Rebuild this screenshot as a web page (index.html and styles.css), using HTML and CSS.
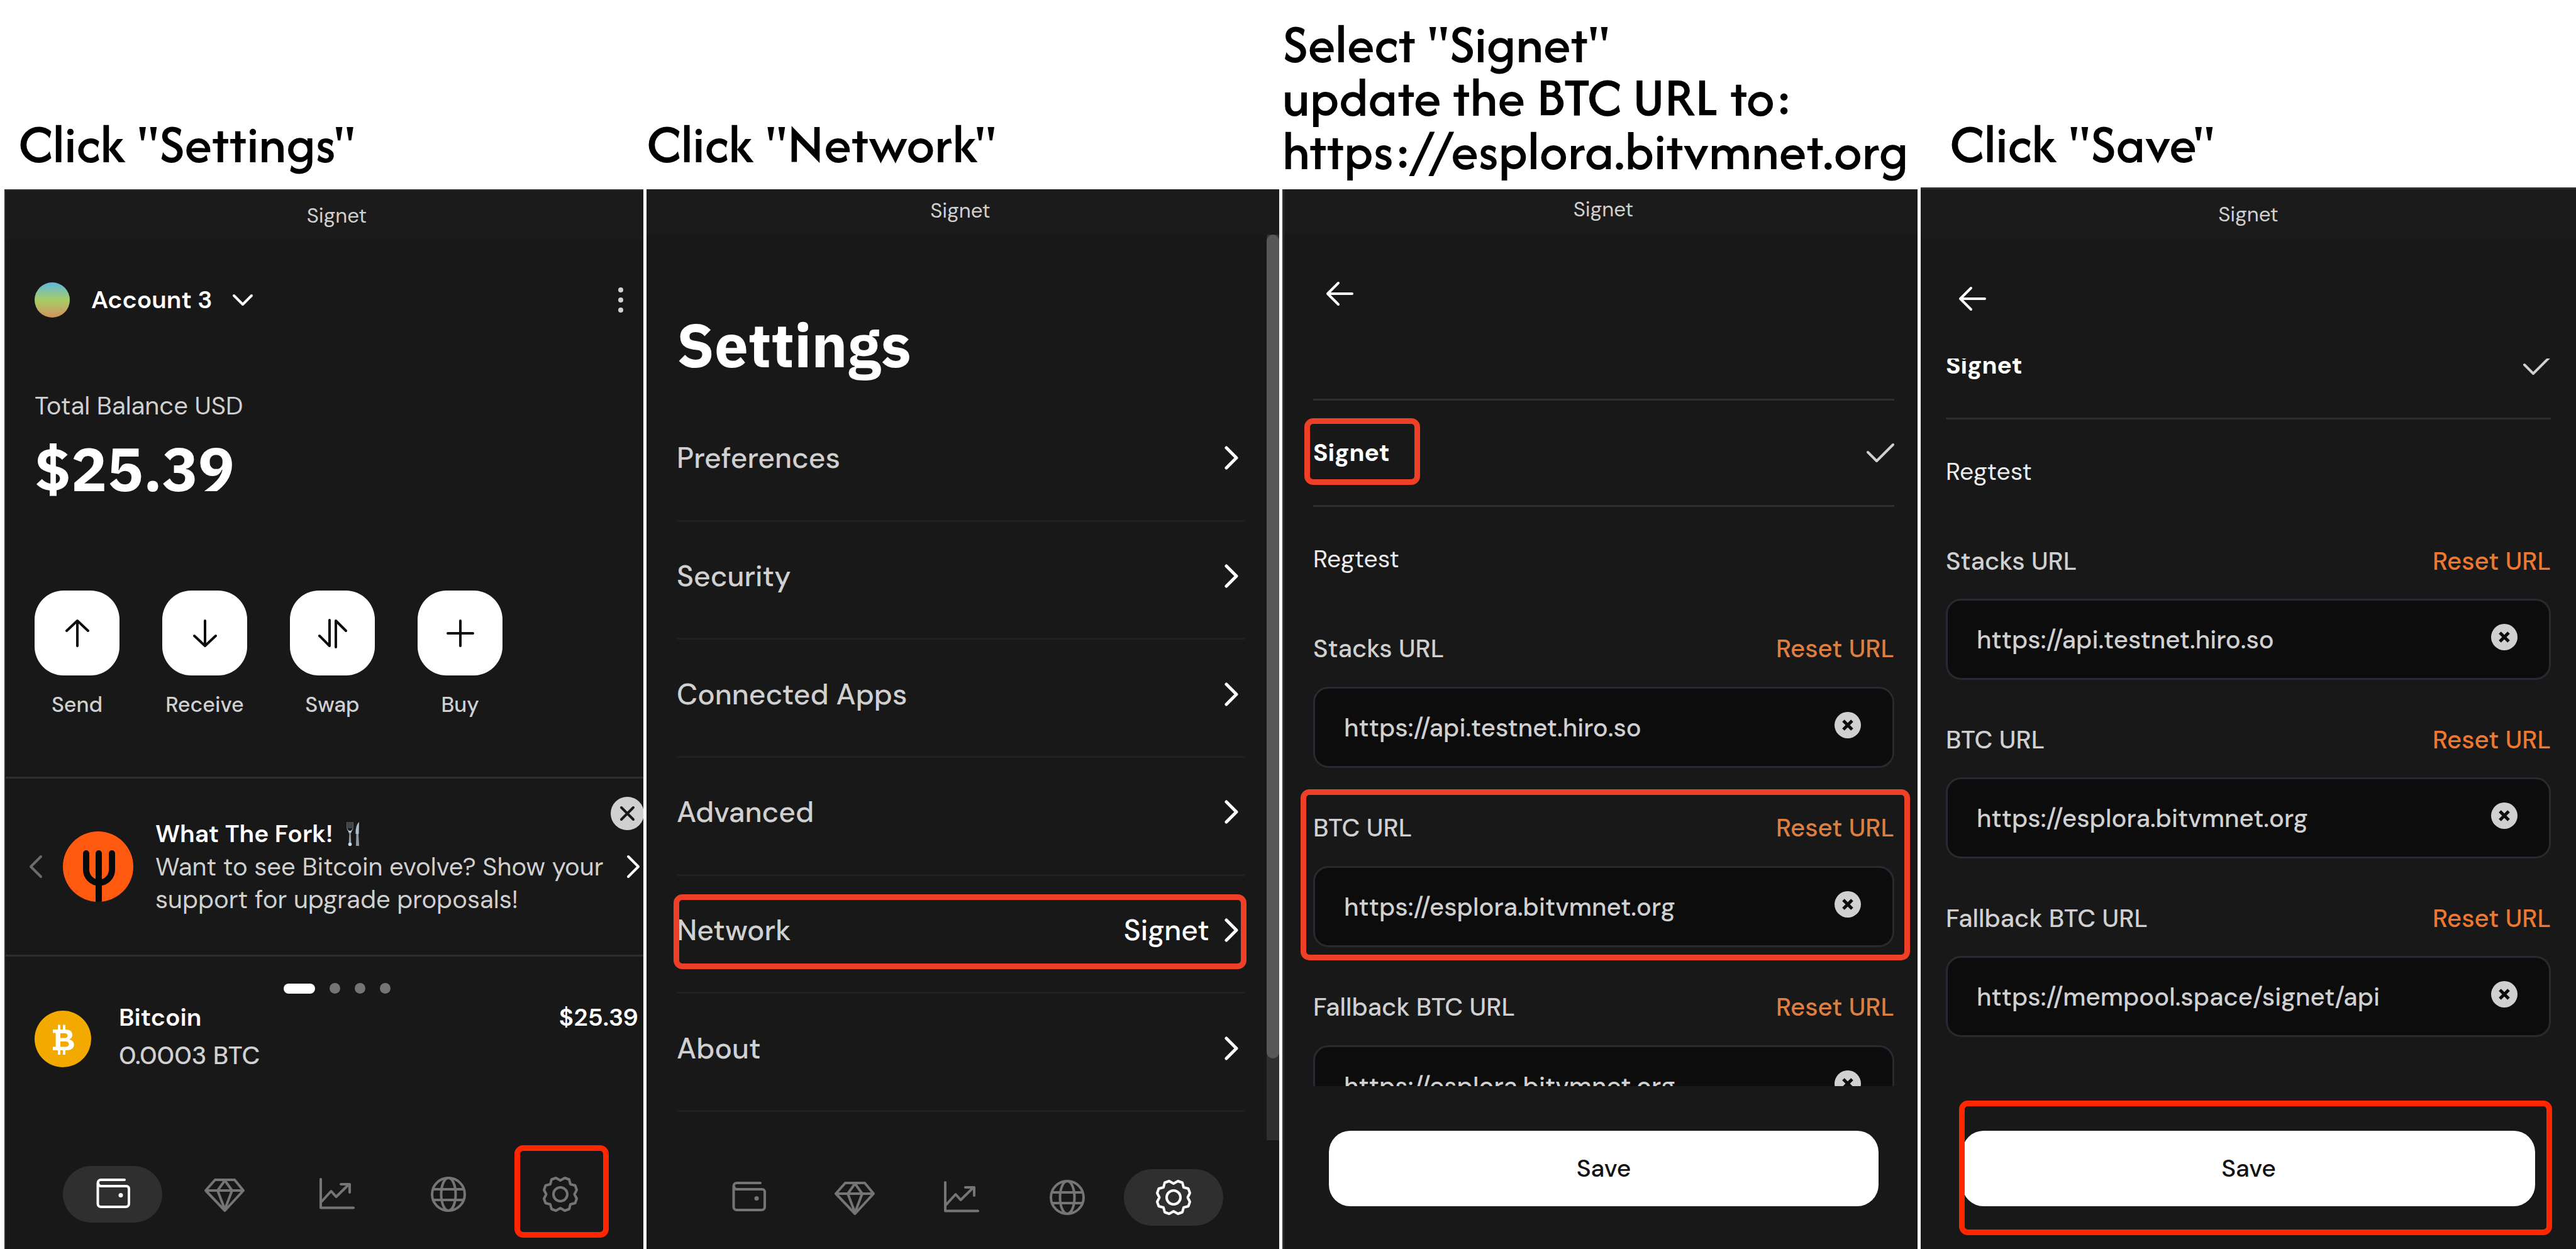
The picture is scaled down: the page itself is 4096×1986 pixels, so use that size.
FILE: index.html
```html
<!DOCTYPE html>
<html lang="en">
<head>
<meta charset="utf-8">
<meta name="viewport" content="width=device-width, initial-scale=1">
<title>Switch the wallet to Signet</title>
<link rel="stylesheet" href="styles.css">
</head>
<body>
<svg class="defs" aria-hidden="true">
  <symbol id="wallet" viewBox="0 0 72 72"><path d="M55 13H17.500a5 5 0 0 0-5 5v33a5 5 0 0 0 5 5H57a5 5 0 0 0 5-5V27a4 4 0 0 0-4-4H17a5 5 0 0 1-4-5"/><circle class="solid" cx="49" cy="37.500" r="3.500"/></symbol>
  <symbol id="gem" viewBox="0 0 72 72"><path d="M21 13H52L66 30 36.500 62 6 30ZM6 30H66M36.500 14L25 30 36.500 60 48 30Z"/></symbol>
  <symbol id="chart" viewBox="0 0 72 72"><path d="M11 12V57.500H63M12 48L27.500 31 35.500 40 56 20M43 20H57V33"/></symbol>
  <symbol id="globe" viewBox="0 0 72 72"><circle cx="36" cy="36" r="26"/><ellipse cx="36" cy="36" rx="11.500" ry="26"/><path d="M12 28H60M12 45H60"/></symbol>
  <symbol id="gear" viewBox="0 0 72 72"><path d="M36 14L43 10 50 12.500 52 20 59.500 22 62 29 58.500 36 62 43 59.500 50 52 52 50 59.500 43 62 36 58 29 62 22 59.500 20 52 12.500 50 10 43 13.500 36 10 29 12.500 22 20 20 22 12.500 29 10Z"/><circle cx="36" cy="36" r="11"/></symbol>
  <symbol id="next" viewBox="0 0 22 38"><path d="M3 3L19 19 3 35"/></symbol>
  <symbol id="back" viewBox="0 0 44 40"><path d="M20 3L3 20 20 37M3 20H42"/></symbol>
  <symbol id="check" viewBox="0 0 44 32"><path d="M2 15L16 29 42 3"/></symbol>
  <symbol id="clear" viewBox="0 0 42 42"><circle class="disc" cx="21" cy="21" r="21"/><path d="M14 14L28 28M28 14L14 28"/></symbol>
</svg>

<main class="board">

  <section class="step">
    <h2 class="caption">Click "Settings"</h2>
    <div class="phone phone-wallet">
      <header class="netbar">Signet</header>
      <div class="account">
        <span class="avatar"></span>
        <button class="account-name">Account 3
          <svg class="line down" viewBox="0 0 34 20"><path d="M3 3L17 17 31 3"/></svg>
        </button>
        <button class="kebab" aria-label="More"><svg viewBox="0 0 54 40"><circle cx="27" cy="4" r="4"/><circle cx="27" cy="20" r="4"/><circle cx="27" cy="36" r="4"/></svg></button>
      </div>
      <p class="balance-label">Total Balance USD</p>
      <p class="balance">$25.39</p>
      <div class="actions">
        <div class="action"><button aria-labelledby="a1"><svg viewBox="0 0 48 48"><path d="M24 44V4M7 20L24 4 41 20"/></svg></button><span id="a1">Send</span></div>
        <div class="action"><button aria-labelledby="a2"><svg viewBox="0 0 48 48"><path d="M24 4V44M7 28L24 44 41 28"/></svg></button><span id="a2">Receive</span></div>
        <div class="action"><button aria-labelledby="a3"><svg viewBox="0 0 48 48"><path d="M19 3V44L3 28M29 46V4L45 20"/></svg></button><span id="a3">Swap</span></div>
        <div class="action"><button aria-labelledby="a4"><svg viewBox="0 0 48 48"><path d="M24 4V44M4 24H44"/></svg></button><span id="a4">Buy</span></div>
      </div>
      <div class="banner">
        <button class="arrow" aria-label="Previous"><svg class="line dim flip"><use href="#next"/></svg></button>
        <svg class="fork" viewBox="0 0 112 112"><clipPath id="round"><circle cx="56" cy="56" r="56"/></clipPath><g clip-path="url(#round)"><rect width="112" height="112" fill="#ff5a0f"/><path d="M37 35V61A20 20 0 0 0 78 61V35M57 35V114" fill="none" stroke="#070a0c" stroke-width="10" stroke-linecap="round"/></g></svg>
        <div class="banner-text">
          <strong>What The Fork! <svg class="cutlery" viewBox="0 0 22 40"><path d="M1 1V10Q1 15 5.500 16 10 15 10 10V1M4 1V11M7 1V11" fill="none" stroke="#6d7278" stroke-width="1.500"/><path d="M2 13Q5.500 18 9 13L7 19H4Z" fill="#c4dcf4"/><path d="M4.500 17H6.500L7.500 38H3.500Z" fill="#8b98a6"/><circle cx="5.500" cy="36.500" r="2.800" fill="#c4dcf4"/><path d="M20 1Q14 6 14.500 20H19.500Z" fill="#aebdca"/><path d="M15.500 20H19L20 39H15Z" fill="#8f9aa5"/></svg></strong>
          <span>Want to see Bitcoin evolve? Show your support for upgrade proposals!</span>
        </div>
        <button class="arrow" aria-label="Next"><svg class="line"><use href="#next"/></svg></button>
        <button class="close" aria-label="Close"><svg viewBox="0 0 53 53"><path d="M17 17L36 36M36 17L17 36"/></svg></button>
      </div>
      <div class="dots"><i class="on"></i><i></i><i></i><i></i></div>
      <div class="coin">
        <svg viewBox="0 0 90 90"><circle cx="45" cy="45" r="45" fill="#f2a900"/><path fill="#fff" fill-rule="evenodd" d="M29 30H49C57 30 60 34 60 38.500 60 42 58 44.500 55 45.800 60 47 62.600 50 62.600 54 62.600 60 58 63 50 63H29V57.500H33.600V35.500H29ZM41 36V43.500H47C51 43.500 52.500 42 52.500 39.700 52.500 37.500 51 36 47 36ZM41 49V57.500H48C52.500 57.500 54.500 56 54.500 53.200 54.500 50.500 52.500 49 48 49Z"/><path stroke="#fff" stroke-width="4" d="M39 22.500V31M47 22.500V31M39 62V70M47 62V70"/></svg>
        <div class="coin-text"><strong>Bitcoin</strong><span>0.0003 BTC</span></div>
        <strong class="coin-value">$25.39</strong>
      </div>
      <nav class="tabs">
        <button class="on" aria-label="Wallet"><svg><use href="#wallet"/></svg></button>
        <button aria-label="Collectibles"><svg><use href="#gem"/></svg></button>
        <button aria-label="Stacking"><svg><use href="#chart"/></svg></button>
        <button aria-label="Explore"><svg><use href="#globe"/></svg></button>
        <button aria-label="Settings"><svg><use href="#gear"/></svg><span class="mark mark-pure mark-gear"></span></button>
      </nav>
    </div>
  </section>

  <section class="step">
    <h2 class="caption">Click "Network"</h2>
    <div class="phone phone-settings">
      <header class="netbar">Signet</header>
      <div class="pane">
        <div class="menu">
          <h1>Settings</h1>
          <ul>
            <li><button>Preferences<svg class="line"><use href="#next"/></svg></button></li>
            <li><button>Security<svg class="line"><use href="#next"/></svg></button></li>
            <li><button>Connected Apps<svg class="line"><use href="#next"/></svg></button></li>
            <li><button>Advanced<svg class="line"><use href="#next"/></svg></button></li>
            <li><button>Network<span class="value">Signet</span><svg class="line"><use href="#next"/></svg></button><span class="mark mark-row"></span></li>
            <li><button>About<svg class="line"><use href="#next"/></svg></button></li>
          </ul>
        </div>
        <div class="track"><div class="thumb"></div></div>
      </div>
      <nav class="tabs">
        <button aria-label="Wallet"><svg><use href="#wallet"/></svg></button>
        <button aria-label="Collectibles"><svg><use href="#gem"/></svg></button>
        <button aria-label="Stacking"><svg><use href="#chart"/></svg></button>
        <button aria-label="Explore"><svg><use href="#globe"/></svg></button>
        <button class="on" aria-label="Settings"><svg><use href="#gear"/></svg></button>
      </nav>
    </div>
  </section>

  <section class="step">
    <h2 class="caption caption-long">Select "Signet"<br>update the BTC URL to:<br>https://esplora.bitvmnet.org</h2>
    <div class="phone phone-edit">
      <header class="netbar">Signet</header>
      <div class="topbar"><button aria-label="Back"><svg class="line"><use href="#back"/></svg></button></div>
      <div class="scroll">
        <div class="scrolled">
          <button class="option">Testnet</button>
          <button class="option chosen"><span class="option-name">Signet<span class="mark mark-option"></span></span><svg class="line"><use href="#check"/></svg></button>
          <button class="option">Regtest</button>
          <div class="field">
            <div class="field-head"><label for="s1">Stacks URL</label><button>Reset URL</button></div>
            <div class="box"><input id="s1" type="text" value="https://api.testnet.hiro.so"><button aria-label="Clear"><svg><use href="#clear"/></svg></button></div>
          </div>
          <div class="field">
            <div class="field-head"><label for="b1">BTC URL</label><button>Reset URL</button></div>
            <div class="box"><input id="b1" type="text" value="https://esplora.bitvmnet.org"><button aria-label="Clear"><svg><use href="#clear"/></svg></button></div>
            <span class="mark mark-field"></span>
          </div>
          <div class="field">
            <div class="field-head"><label for="f1">Fallback BTC URL</label><button>Reset URL</button></div>
            <div class="box"><input id="f1" type="text" value="https://esplora.bitvmnet.org"><button aria-label="Clear"><svg><use href="#clear"/></svg></button></div>
          </div>
        </div>
      </div>
      <footer class="foot"><button class="save">Save</button></footer>
    </div>
  </section>

  <section class="step">
    <h2 class="caption">Click "Save"</h2>
    <div class="phone phone-save">
      <header class="netbar">Signet</header>
      <div class="topbar"><button aria-label="Back"><svg class="line"><use href="#back"/></svg></button></div>
      <div class="scroll">
        <div class="scrolled">
          <button class="option chosen"><span class="option-name">Signet</span><svg class="line"><use href="#check"/></svg></button>
          <button class="option">Regtest</button>
          <div class="field">
            <div class="field-head"><label for="s2">Stacks URL</label><button>Reset URL</button></div>
            <div class="box"><input id="s2" type="text" value="https://api.testnet.hiro.so"><button aria-label="Clear"><svg><use href="#clear"/></svg></button></div>
          </div>
          <div class="field">
            <div class="field-head"><label for="b2">BTC URL</label><button>Reset URL</button></div>
            <div class="box"><input id="b2" type="text" value="https://esplora.bitvmnet.org"><button aria-label="Clear"><svg><use href="#clear"/></svg></button></div>
          </div>
          <div class="field">
            <div class="field-head"><label for="f2">Fallback BTC URL</label><button>Reset URL</button></div>
            <div class="box"><input id="f2" type="text" value="https://mempool.space/signet/api"><button aria-label="Clear"><svg><use href="#clear"/></svg></button></div>
          </div>
        </div>
      </div>
      <footer class="foot"><button class="save">Save<span class="mark mark-pure mark-save"></span></button></footer>
    </div>
  </section>

</main>
</body>
</html>
```
FILE: styles.css
```css
:root {
  --bg: #181818;
  --bar: #1b1b1b;
  --rule: #2e2e2e;
  --text: #d0d0d0;
  --white: #fff;
}

* { box-sizing: border-box; }

body {
  margin: 0;
  background: #fff;
  color: var(--text);
  font: 500 40px/52px "DM Sans", "Open Sans", sans-serif;
}

h1, h2, p, ul { margin: 0; padding: 0; }
li { list-style: none; }
strong { font-size: 39px; font-weight: 600; color: var(--white); }

button {
  margin: 0;
  padding: 0;
  border: 0;
  background: none;
  color: inherit;
  font: inherit;
  text-align: left;
  cursor: pointer;
}

svg { display: block; flex: none; }
.defs { position: absolute; width: 0; height: 0; }

.line {
  fill: none;
  stroke: var(--white);
  stroke-width: 4;
  stroke-linecap: round;
  stroke-linejoin: round;
}
.line.dim { stroke: #6b6b6b; }
.flip { transform: scaleX(-1); }

/* Four steps side by side */
.board {
  display: grid;
  grid-template-columns: 1016fr 1006fr 1010fr 1042fr;
  column-gap: 5px;
  height: 100vh;
  padding-left: 7px;
}

.step {
  display: flex;
  flex-direction: column;
  min-width: 0;
  min-height: 0;
}

.caption {
  display: flex;
  flex-direction: column;
  justify-content: flex-end;
  flex: none;
  height: 301px;
  padding: 0 0 30px 22px;
  color: #000;
  font: 500 89px/85px "Afacad", "Lato", sans-serif;
  white-space: nowrap;
}
.caption br { display: none; }
.step:nth-child(2) .caption { padding-left: 0; }
.caption-long {
  display: block;
  padding: 27px 0 0;
}
.caption-long br { display: inline; }
.step:nth-child(4) .caption {
  height: 298px;
  padding: 0 0 27px 46px;
}

.phone {
  position: relative;
  display: flex;
  flex-direction: column;
  flex: 1;
  min-height: 0;
  overflow: hidden;
  background: var(--bg);
}

.netbar {
  flex: none;
  padding-bottom: 18px;
  background: var(--bar);
  font-size: 33px;
  font-weight: 400;
  line-height: 40px;
  text-align: center;
}
.phone-wallet .netbar { padding: 20px 0 18px 39px; }
.phone-settings .netbar { padding: 14px 8px 18px 0; }
.phone-edit .netbar { padding-top: 12px; padding-left: 8px; }
.phone-save .netbar { padding-top: 20px; }

/* Red outlines around what to press */
.mark {
  position: absolute;
  border: 9px solid #ee4026;
  border-radius: 14px;
  pointer-events: none;
}
.mark-pure { border-color: #ff2600; }
.mark-gear { inset: -33px 2px -24px 6px; }
.mark-row { inset: 29px -2px 36px -5px; }
.mark-option { inset: -29px -48px -25px -14px; }
.mark-field { inset: -35px -25px -21px -20px; }
.mark-save { inset: -48px -27px -46px -5px; }

/* Wallet */
.phone-wallet {
  border-top: 2px solid var(--rule);
  border-left: 2px solid var(--rule);
}
.account {
  display: flex;
  align-items: center;
  margin: 68px 9px 0 46px;
}
.avatar {
  width: 56px;
  height: 56px;
  margin-right: 34px;
  border-radius: 50%;
  background: linear-gradient(#5eb9de, #a9cc66 50%, #d0935f);
}
.account-name {
  display: flex;
  align-items: center;
  gap: 31px;
  color: var(--white);
  font-size: 39px;
  font-weight: 600;
}
.down { width: 34px; height: 20px; }
.kebab { margin-left: auto; fill: var(--text); }
.kebab svg { width: 54px; height: 40px; }
.balance-label { margin: 114px 0 0 46px; font-weight: 400; }
.balance {
  margin: 19px 0 0 46px;
  color: var(--white);
  font: 700 96px/110px "IBM Plex Sans", "Open Sans", sans-serif;
}
.actions {
  display: flex;
  gap: 68px;
  padding: 139px 0 92px 46px;
}
.action {
  display: flex;
  flex-direction: column;
  align-items: center;
  gap: 25px;
  width: 135px;
  font-size: 34px;
  line-height: 44px;
}
.action button {
  display: grid;
  place-items: center;
  width: 135px;
  height: 135px;
  border-radius: 46px;
  background: var(--white);
}
.action svg {
  width: 48px;
  height: 48px;
  fill: none;
  stroke: #0c0c0c;
  stroke-width: 4;
  stroke-linecap: round;
  stroke-linejoin: round;
}
.banner {
  position: relative;
  display: flex;
  align-items: center;
  height: 286px;
  padding: 0 5px 0 37px;
  border-top: 3px solid var(--rule);
  border-bottom: 3px solid var(--rule);
}
.arrow svg { width: 22px; height: 38px; }
.fork {
  width: 112px;
  height: 112px;
  margin: 0 35px 0 32px;
}
.banner-text { flex: 1; padding-right: 16px; font-weight: 400; }
.banner-text strong { display: flex; align-items: center; gap: 22px; }
.cutlery { width: 22px; height: 40px; }
.close {
  position: absolute;
  top: 29px;
  right: -1px;
}
.close svg {
  width: 53px;
  height: 53px;
  border-radius: 50%;
  background: var(--text);
  fill: none;
  stroke: #181818;
  stroke-width: 4;
  stroke-linecap: round;
}
.dots {
  display: flex;
  align-items: center;
  justify-content: center;
  gap: 23px;
  padding: 42px 0 0 39px;
}
.dots i {
  width: 17px;
  height: 17px;
  border-radius: 9px;
  background: #757575;
}
.dots .on { width: 50px; height: 16px; background: var(--white); }
.coin {
  display: flex;
  align-items: center;
  margin: 7px 8px 0 46px;
  line-height: 61px;
}
.coin > svg { width: 90px; height: 90px; }
.coin-text {
  display: flex;
  flex-direction: column;
  padding: 0 0 8px 44px;
}
.coin-value { align-self: flex-start; margin-left: auto; }

.tabs {
  display: flex;
  justify-content: space-between;
  margin-top: auto;
  padding: 0 53px 42px 91px;
}
.tabs button {
  position: relative;
  display: grid;
  place-items: center;
  width: 158px;
  height: 90px;
  border-radius: 45px;
}
.tabs svg {
  width: 72px;
  height: 72px;
  fill: none;
  stroke: #757575;
  stroke-width: 4;
  stroke-linejoin: round;
  stroke-linecap: round;
  color: #757575;
}
.tabs .on { background: #2f2f2f; }
.tabs .on svg { stroke: var(--white); color: var(--white); }
.solid { fill: currentColor; stroke: none; }
.phone-settings .tabs { padding: 46px 89px 37px 83px; }

/* Settings menu */
.pane { display: flex; flex: 1; min-height: 0; }
.menu {
  display: flex;
  flex-direction: column;
  flex: 1;
  padding: 115px 34px 45px 48px;
}
.menu h1 {
  color: var(--white);
  font: 700 96px/120px "IBM Plex Sans", "Open Sans", sans-serif;
}
.menu ul {
  display: flex;
  flex-direction: column;
  flex: 1;
  margin-top: 34px;
  font-size: 46px;
}
.menu li {
  position: relative;
  display: flex;
  flex: 1;
  border-bottom: 3px solid #202020;
}
.menu button {
  display: flex;
  align-items: center;
  flex: 1;
  padding: 0 11px 12px 0;
}
.menu .line { width: 22px; height: 38px; margin-left: auto; stroke-width: 5; }
.menu .value { margin-left: auto; color: var(--white); }
.menu .value + .line { margin-left: 24px; }
.track { width: 20px; background: #2f2f2f; }
.thumb { height: 91%; border-radius: 10px; background: #575757; }

/* Network editor */
.phone-edit { border-left: 3px solid var(--rule); }
.phone-save { border-top: 3px solid var(--rule); }
.topbar {
  display: flex;
  align-items: center;
  flex: none;
  height: 194px;
  padding: 0 0 2px 66px;
}
.phone-save .topbar { height: 191px; padding: 0 0 0 60px; }
.topbar svg { width: 44px; height: 40px; }
.scroll { flex: 1; min-height: 0; overflow: hidden; }
.scrolled { margin: -97px 37px 0 46px; }
.phone-save .scrolled { margin: -72px 40px 0; }
.option {
  display: flex;
  align-items: center;
  justify-content: space-between;
  width: 100%;
  height: 169px;
  border-bottom: 3px solid var(--rule);
  color: #ececec;
  font-size: 39px;
  font-weight: 400;
}
.option:has(+ .field) { border-color: transparent; }
.chosen { color: var(--white); font-weight: 700; }
.option-name { position: relative; }
.option svg { width: 44px; height: 32px; stroke: var(--text); }
.field { position: relative; padding-top: 30px; }
.field + .field { padding-top: 0; margin-top: 69px; }
.field-head {
  display: flex;
  justify-content: space-between;
  margin-bottom: 35px;
}
.phone-save .field-head { margin-bottom: 34px; }
.field-head button { color: #dd7f40; }
.phone-save .field-head button { color: #ee7830; }
.box {
  display: flex;
  align-items: center;
  height: 129px;
  padding: 0 50px 0 46px;
  border: 3px solid #272a31;
  border-radius: 24px;
  background: #0c0c0c;
}
.box input {
  flex: 1;
  min-width: 0;
  height: 100%;
  padding: 0;
  border: 0;
  outline: 0;
  background: none;
  color: var(--text);
  font: inherit;
}
.box button { padding-bottom: 8px; }
.box svg {
  width: 42px;
  height: 42px;
  fill: none;
  stroke: #0c0c0c;
  stroke-width: 5;
}
.disc { fill: var(--text); stroke: none; }
.foot {
  flex: none;
  padding: 71px 62px 68px 71px;
}
.phone-save .foot { padding-left: 66px; padding-right: 65px; }
.save {
  position: relative;
  display: block;
  width: 100%;
  height: 120px;
  border-radius: 34px;
  background: var(--white);
  color: #121212;
  font-size: 39px;
  text-align: center;
}
```
